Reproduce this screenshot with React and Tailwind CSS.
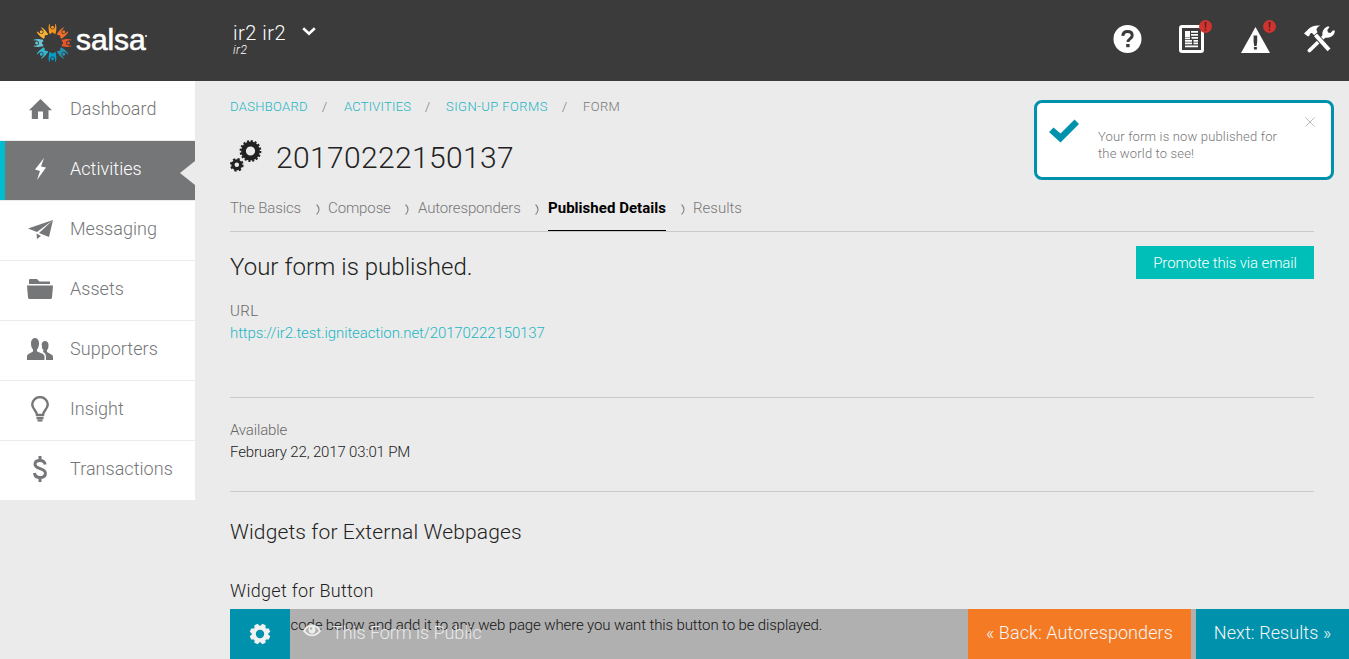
import React from "react";

const ICONS = {
  home: "M11.500 0 23 11.200H19.500V20H14V12.500H9V20H2.800V11.200H0Z",
  bolt: "M9 0 0 11.500 5 13 2 22 11 9.500 6 8.500Z",
  plane: "M0 8.500 25 0 9 12ZM25 0 21 17 11 13ZM8.500 13.500 13 16 9 19Z",
  folder: "M3 0h7l2.500 2.500H23V5H2V1a1 1 0 0 1 1-1ZM0 6.500h26L25 18.500a1.500 1.500 0 0 1-1.500 1.500h-21A1.500 1.500 0 0 1 1 18.500Z",
  people:
    "M4 5a4 5 0 0 1 8 0c0 3-.5 5-2 6.500v2l5 2c2 .8 2.500 2 2.500 3V22H0v-3.500c0-1.500 1-2.300 2.500-3l3.500-2v-2C4.500 10 4 8 4 5ZM14.500 7c.3-2.500 1.500-4 3.500-4s3.500 1.500 3.500 4c0 2.500-.3 4-1.500 5v2l3.500 2c1.800.8 2.500 1.800 2.500 3v3h-7v-3c0-2.500-1-4-3-5l.5-2c-1.700-1-1.700-3-1.500-5Z",
};

function Glyph({ name, w, h }) {
  return (
    <svg width={w} height={h} viewBox={`0 0 ${w} ${h}`} fill="currentColor">
      <path d={ICONS[name]} />
    </svg>
  );
}

function Bulb() {
  return (
    <svg width="18" height="26" viewBox="0 0 18 26" fill="none" stroke="currentColor" strokeWidth="2.400">
      <path d="M6 19C6 15 1.200 13 1.200 8.500a7.800 7.400 0 0 1 15.600 0C16.800 13 12 15 12 19Z" />
      <path d="M5.500 22.200h7M6.500 24.500h5" strokeWidth="2.200" />
    </svg>
  );
}

function Dollar() {
  return (
    <svg width="14" height="26" viewBox="0 0 14 26" fill="none" stroke="currentColor" strokeWidth="3">
      <path d="M12.200 8.500C11.500 5.300 9.500 4.500 7 4.500c-3 0-5 1.300-5 3.700 0 5.500 10.400 3.300 10.400 9 0 2.700-2.200 4.300-5.400 4.300-3.200 0-5.200-1.700-5.500-4.500M7 0v4.500M7 21.500V26" />
    </svg>
  );
}

const NAV = [
  { label: "Dashboard", icon: <Glyph name="home" w={23} h={20} /> },
  { label: "Activities", icon: <Glyph name="bolt" w={11} h={22} /> },
  { label: "Messaging", icon: <Glyph name="plane" w={25} h={19} /> },
  { label: "Assets", icon: <Glyph name="folder" w={26} h={20} /> },
  { label: "Supporters", icon: <Glyph name="people" w={26} h={22} /> },
  { label: "Insight", icon: <Bulb /> },
  { label: "Transactions", icon: <Dollar /> },
];

const LOGO_COLORS = ["#f7941e", "#f26f29", "#e4572a", "#2593ad", "#069dc6", "#37b5cd", "#68c4d0", "#fbb032"];

function Logo() {
  return (
    <div className="flex items-center">
      <svg width="39" height="40" viewBox="-19.500 -20 39 40">
        {LOGO_COLORS.map((c, i) => (
          <g key={c} transform={`rotate(${i * 45})`}>
            <circle cx="0" cy="-15.800" r="1.500" fill={c} />
            <path
              d="M-3.300-19C-4.400-15-3.800-13.500-3.200-9.300H-1.500C-1-11 1-11 1.500-9.300H3.200C3.800-13.500 4.400-15 3.300-19L2.600-18.700C2.800-15.500 2-13.500 0-13.500S-2.800-15.500-2.600-18.700Z"
              fill={c}
            />
          </g>
        ))}
      </svg>
      <span className="ml-[4px] mt-[-6px] font-['Liberation_Sans'] text-[30px] leading-[36px] tracking-[-0.100px] text-white [-webkit-text-stroke:0.600px_white]">
        salsa
      </span>
      <span className="-ml-px mt-[-15px] h-[2px] w-[2px] rounded-full bg-white" />
    </div>
  );
}

function AlertDot({ className }) {
  return (
    <span className={`absolute flex h-[13px] w-[13px] items-center justify-center rounded-full bg-[#cf3430] ${className}`}>
      <svg width="3" height="9" viewBox="0 0 3 9" fill="#5c2020">
        <path d="M.5 0h2L2 6H1ZM.7 7h1.600v1.600H.7Z" />
      </svg>
    </span>
  );
}

function Header() {
  return (
    <header className="flex h-[81px] shrink-0 bg-[#3b3b3b] text-white">
      <div className="flex h-[63px] w-[233px] items-end pl-[33px]">
        <Logo />
      </div>
      <div className="pt-[21px]">
        <div className="flex items-start">
          <span className="text-[20px] leading-[25px] tracking-[0.500px]">ir2 ir2</span>
          <svg className="ml-[16px] mt-[6px]" width="14" height="9" viewBox="0 0 14 9" fill="none" stroke="white" strokeWidth="2.600">
            <path d="M1.200 1.200 7 6.800l5.800-5.600" />
          </svg>
        </div>
        <div className="mt-[-3px] text-[12px] italic leading-[14px] tracking-[0.500px]">ir2</div>
      </div>
      <div className="ml-auto flex items-start pr-[14px] pt-[25px]">
        <svg width="29" height="28" viewBox="0 0 29 28">
          <circle cx="14.500" cy="14" r="14" fill="white" />
          <path d="M9.800 10.800C10 7.800 11.800 6.500 14.500 6.500c2.900 0 4.700 1.500 4.700 3.900 0 3.300-4.300 3.500-4.300 6.600" fill="none" stroke="#3b3b3b" strokeWidth="3" />
          <path d="M13.200 19h3.400v3.200h-3.400Z" fill="#3b3b3b" />
        </svg>
        <div className="relative ml-[37px] mr-[37px]">
          <svg width="25" height="28" viewBox="0 0 25 28" fill="none" stroke="white">
            <rect x="1.500" y="1.500" width="22" height="25" rx="1.500" strokeWidth="3" />
            <rect x="6" y="6" width="5" height="6" fill="white" stroke="none" />
            <path d="M12 6.800h7M12 9.800h7M12.500 12.800H19M6 13.300h5M6 15.800h7M14.500 15.800H19M6 18.300h7M14.500 18.300H19M6 21.300h13" strokeWidth="1.700" />
          </svg>
          <AlertDot className="-right-[8px] -top-[5px]" />
        </div>
        <div className="relative mr-[34px]">
          <svg width="29" height="28" viewBox="0 0 29 28">
            <path d="M14.500 2 29 28H0Z" fill="white" />
            <path d="M12.600 10.500h3.600v6.500l-.6 4h-2.400l-.6-4ZM12.900 22h3v2.500h-3Z" fill="#3b3b3b" />
          </svg>
          <AlertDot className="-right-[6px] -top-[5px]" />
        </div>
        <svg width="31" height="28" viewBox="0 0 31 28" fill="white">
          <path d="M0 8.500 4 4.500C7 1 11 0 16.500 0.500 14 1.500 12.500 3 12.500 5l1 2.200L10.500 10.500 8.500 8.500C7 7.500 6 8.500 5.500 10.500L4 11.500Z" />
          <path d="M5.500 25.500 21.500 10" stroke="white" strokeWidth="3.800" strokeLinecap="round" />
          <path d="M11 9.500 26 26" stroke="#3b3b3b" strokeWidth="5.600" />
          <path d="M11.500 9.800 25 24.800" stroke="white" strokeWidth="4" />
          <path d="M19 12.500C17.500 8 18.500 3.500 24 1.200L25.500 2 23.300 5 24 7.500 26.500 8 28.800 5.500 30.800 5.500C31 10.500 26 13.500 21.500 12.500Z" />
        </svg>
      </div>
    </header>
  );
}

function Sidebar() {
  return (
    <nav className="w-[195px] shrink-0">
      {NAV.map((item, i) => {
        const active = item.label === "Activities";
        return (
          <div
            key={item.label}
            className={
              active
                ? "flex h-[60px] border-b border-[#ebebeb] bg-[#757678] text-white"
                : i === NAV.length - 1
                  ? "flex h-[59px] bg-white text-[#757678]"
                  : "flex h-[60px] border-b border-[#ebebeb] bg-white text-[#757678]"
            }
          >
            <span className={active ? "w-[5px] bg-[#00bcce]" : "w-[5px]"} />
            <span className="flex w-[70px] items-center justify-center pb-[3px]">{item.icon}</span>
            <span className="-ml-[5px] mt-[16px] text-[18px] leading-[24px] tracking-[0.040px]">{item.label}</span>
            {active && (
              <svg className="ml-auto mt-[19px]" width="15" height="26" viewBox="0 0 15 26">
                <path d="M15 1v24L0 13Z" fill="#ebebeb" />
              </svg>
            )}
          </div>
        );
      })}
    </nav>
  );
}

function Gears() {
  return (
    <svg width="32" height="32" viewBox="0 0 32 32" fill="none" stroke="#222">
      <circle cx="20.500" cy="11" r="7" strokeWidth="4.800" />
      <circle cx="20.500" cy="11" r="9.800" strokeWidth="2.200" strokeDasharray="2.050 1.799" />
      <circle cx="6.800" cy="24.800" r="3.900" strokeWidth="3.200" />
      <circle cx="6.800" cy="24.800" r="5.900" strokeWidth="1.900" strokeDasharray="2.317 2.317" />
    </svg>
  );
}

function Chevron({ className }) {
  return (
    <svg className={className} width="4" height="11" viewBox="0 0 4 11" fill="none" stroke="#858585" strokeWidth="1.100">
      <path d="M.6.500Q5.400 5.500.6 10.500" />
    </svg>
  );
}

function Content() {
  return (
    <main className="w-[1119px] pl-[35px] text-[#222]">
      <div className="mt-[18px] flex h-[16px] text-[13px] leading-[16px] text-[#1cb5c4]">
        <span className="w-[92px] tracking-[0.320px]">DASHBOARD</span>
        <span className="w-[22px] text-[#777]">/</span>
        <span className="w-[81px] tracking-[0.200px]">ACTIVITIES</span>
        <span className="w-[21px] text-[#777]">/</span>
        <span className="w-[116px] tracking-[0.440px]">SIGN-UP FORMS</span>
        <span className="w-[21px] text-[#777]">/</span>
        <span className="tracking-[0.400px] text-[#777]">FORM</span>
      </div>
      <div className="mt-[25px] flex h-[39px]">
        <Gears />
        <h1 className="-mt-px ml-[14px] text-[30px] leading-[38px] tracking-[0.350px]">20170222150137</h1>
      </div>
      <div className="mt-[19px] flex h-[34px] w-[1084px] border-b border-[#c9c9c9] text-[15px] leading-[20px] text-[#777]">
        <span className="w-[86px] tracking-[-0.110px]">The Basics</span>
        <Chevron className="mr-[8px] mt-[6px]" />
        <span className="w-[77px] tracking-[-0.110px]">Compose</span>
        <Chevron className="mr-[9px] mt-[6px]" />
        <span className="w-[117px] tracking-[-0.140px]">Autoresponders</span>
        <Chevron className="mr-[9px] mt-[6px]" />
        <span className="h-[33px] w-[118px] border-b border-black font-bold tracking-[0.030px] text-black">Published Details</span>
        <Chevron className="ml-[15px] mr-[8px] mt-[6px]" />
        <span>Results</span>
      </div>
      <div className="flex w-[1084px] items-start justify-between">
        <h2 className="mt-[19px] text-[24px] leading-[32px] tracking-[0.040px]">Your form is published.</h2>
        <button className="mt-[14px] flex h-[33px] w-[178px] items-center justify-center bg-[#00bfb8] text-[15px] leading-[20px] tracking-[-0.130px] text-white">
          Promote this via email
        </button>
      </div>
      <div className="mt-[17px] text-[15px] leading-[22px]">
        <div className="tracking-[0.400px] text-[#666]">URL</div>
        <div className="tracking-[-0.100px] text-[#1cb5c4]">https://ir2.test.igniteaction.net/20170222150137</div>
      </div>
      <div className="mt-[53px] w-[1084px] border-t border-[#c9c9c9] pt-[21px] text-[15px] leading-[22px] tracking-[-0.150px]">
        <div className="text-[#666]">Available</div>
        <div>February 22, 2017 03:01 PM</div>
      </div>
      <div className="mt-[28px] w-[1084px] border-t border-[#c9c9c9] pt-[26px]">
        <h3 className="text-[21px] leading-[28px] tracking-[0.140px]">Widgets for External Webpages</h3>
        <h4 className="mt-[33px] text-[18px] leading-[24px] tracking-[0.300px]">Widget for Button</h4>
        <p className="mt-[12px] text-[15px] leading-[20px] tracking-[-0.120px]">
          Copy the code below and add it to any web page where you want this button to be displayed.
        </p>
      </div>
    </main>
  );
}

function Toast() {
  return (
    <div className="absolute left-[1034px] top-[100px] flex h-[80px] w-[300px] rounded-[8px] border-[3px] border-[#0091ad] bg-white">
      <svg className="ml-[12px] mt-[16px]" width="31" height="25" viewBox="0 0 31 25" fill="#0091ad">
        <path d="M0 13 4.500 8.500 11.500 14.500 25.500 .5 30 5 11.500 23.500Z" />
      </svg>
      <div className="ml-[18px] mt-[25px] w-[207px] text-[13px] leading-[17px] tracking-[0.160px] text-[#777]">
        Your form is now published for
        <br />
        the world to see!
      </div>
      <svg className="mt-[14px]" width="10" height="10" viewBox="0 0 10 10" stroke="#bbb" strokeWidth="1">
        <path d="M.5.500 9.500 9.500M9.500.500.500 9.500" />
      </svg>
    </div>
  );
}

function ActionBar() {
  return (
    <div className="absolute left-[230px] top-[609px] flex h-[50px] w-[1119px] bg-black/25 text-[18px] leading-[24px]">
      <button className="flex w-[60px] items-center justify-center bg-[#0091ad]">
        <svg width="22" height="22" viewBox="-11 -11 22 22" fill="none" stroke="#f2f2f2">
          <circle r="6.200" strokeWidth="4" />
          {[0, 45, 90, 135, 180, 225, 270, 315].map((a) => (
            <path key={a} d="M-2.800-7.500-1.800-10.300H1.800L2.800-7.500Z" fill="#f2f2f2" stroke="none" transform={`rotate(${a + 22.5})`} />
          ))}
        </svg>
      </button>
      <div className="flex w-[678px] pl-[13px] text-[#e9e9e9]">
        <svg className="mt-[15px]" width="18" height="13" viewBox="0 0 19 13">
          <path d="M0 7C4-2 15-2 19 7 14 14.500 5 14.500 0 7Z" fill="#ececec" />
          <path d="M2.500 6.800C4 4 5.500 3 6.500 2.700 5 6 6 9.800 9.500 9.800S14 6 12.500 2.700C14 3.200 15.500 4.500 16.700 6.800 13 12 6 12 2.500 6.800Z" fill="#b0b0b0" />
          <circle cx="8.500" cy="4.500" r="1.300" fill="#b0b0b0" />
        </svg>
        <span className="ml-[11px] mt-[12px] tracking-[-0.060px]">This Form is Public</span>
      </div>
      <button className="flex w-[223px] justify-center bg-[#f47a23] pt-[12px] tracking-[0.080px] text-[#f5f5f5]">« Back: Autoresponders</button>
      <button className="ml-[5px] flex w-[153px] justify-center bg-[#0091ad] pt-[12px] tracking-[0.080px] text-[#f5f5f5]">Next: Results »</button>
    </div>
  );
}

export default function App() {
  return (
    <div className="relative flex h-[659px] w-[1349px] flex-col overflow-hidden bg-[#ebebeb] font-['Roboto',sans-serif] font-light">
      <Header />
      <div className="flex">
        <Sidebar />
        <Content />
      </div>
      <Toast />
      <ActionBar />
    </div>
  );
}
